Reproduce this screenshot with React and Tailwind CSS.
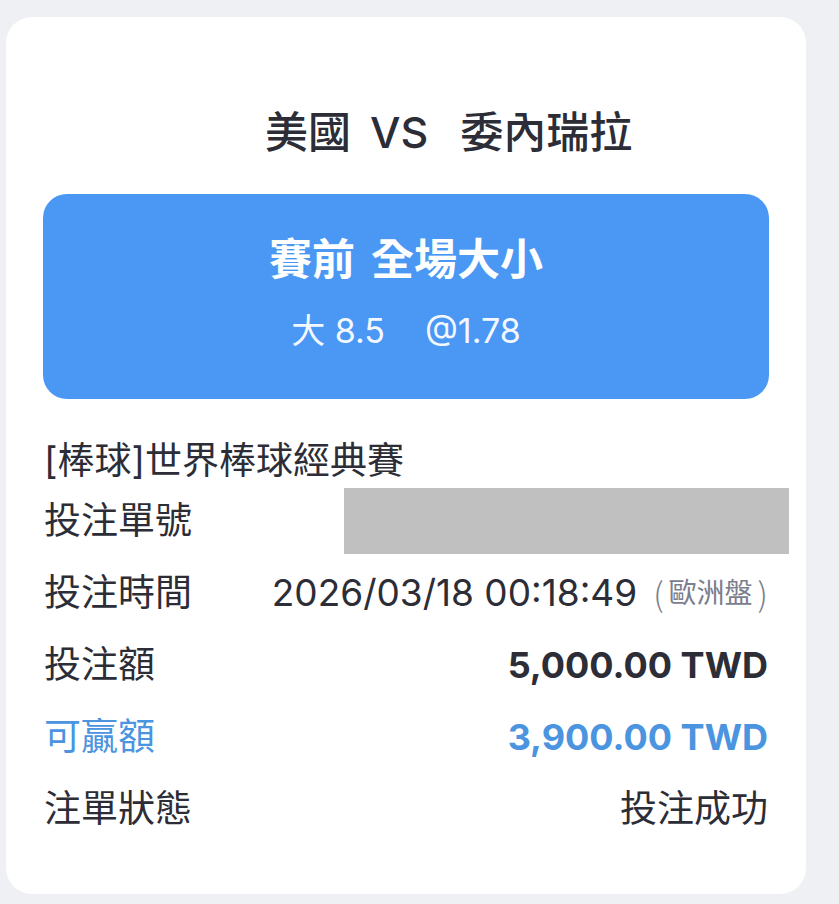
export default function App() {
  const font = "font-['Inter','Noto_Sans_CJK_TC',sans-serif]";
  return (
    <div className={`h-[904px] w-[839px] overflow-hidden bg-[#eff0f4] pl-[6px] pt-[17px] ${font} text-[#2c2d36]`}>
      <div className="w-[800px] rounded-[26px] bg-white pb-[49px]">
        <div className="flex items-baseline pl-[259px] pt-[91px] text-[43px] font-medium leading-[48px]">
          <span>美國</span>
          <span className="ml-[19px]">VS</span>
          <span className="ml-[32px]">委內瑞拉</span>
        </div>

        <div className="mx-[37px] mt-[38px] flex h-[205px] flex-col items-center rounded-[24px] bg-[#4a98f4] pt-[40px] text-white">
          <div className="flex gap-[16px] text-[43px] font-bold leading-[50px]">
            <span>賽前</span>
            <span>全場大小</span>
          </div>
          <div className="mt-[27px] flex gap-[40px] text-[34px] leading-[40px] text-[#f3f7ff]">
            <span>大 8.5</span>
            <span>@1.78</span>
          </div>
        </div>

        <div className="px-[38px]">
          <div className="mt-[38px] flex h-[48px] items-center text-[37px] leading-[48px]">
            [棒球]世界棒球經典賽
          </div>
          <div className="flex h-[72px] items-center justify-between text-[37px]">
            <span>投注單號</span>
            <div className="mr-[-21px] h-[66px] w-[445px] bg-[#c0c0c0]" />
          </div>
          <div className="flex h-[72px] items-center justify-between text-[37px]">
            <span>投注時間</span>
            <span className="flex items-center">
              <span className="text-[37px]">2026/03/18 00:18:49</span>
              <span className="ml-[16px] flex items-center text-[28px] leading-[40px] text-[#7b7e8e]">
                <span className="font-['Noto_Sans_CJK_TC',sans-serif] text-[33px] font-light">(</span>
                <span className="ml-[5px]">歐洲盤</span>
                <span className="ml-[5px] font-['Noto_Sans_CJK_TC',sans-serif] text-[33px] font-light">)</span>
              </span>
            </span>
          </div>
          <div className="flex h-[72px] items-center justify-between text-[37px]">
            <span>投注額</span>
            <span className="text-[36px] font-bold">5,000.00 TWD</span>
          </div>
          <div className="flex h-[72px] items-center justify-between text-[37px] text-[#4a94e0]">
            <span>可贏額</span>
            <span className="text-[36px] font-bold">3,900.00 TWD</span>
          </div>
          <div className="flex h-[72px] items-center justify-between text-[37px]">
            <span>注單狀態</span>
            <span>投注成功</span>
          </div>
        </div>
      </div>
    </div>
  );
}
